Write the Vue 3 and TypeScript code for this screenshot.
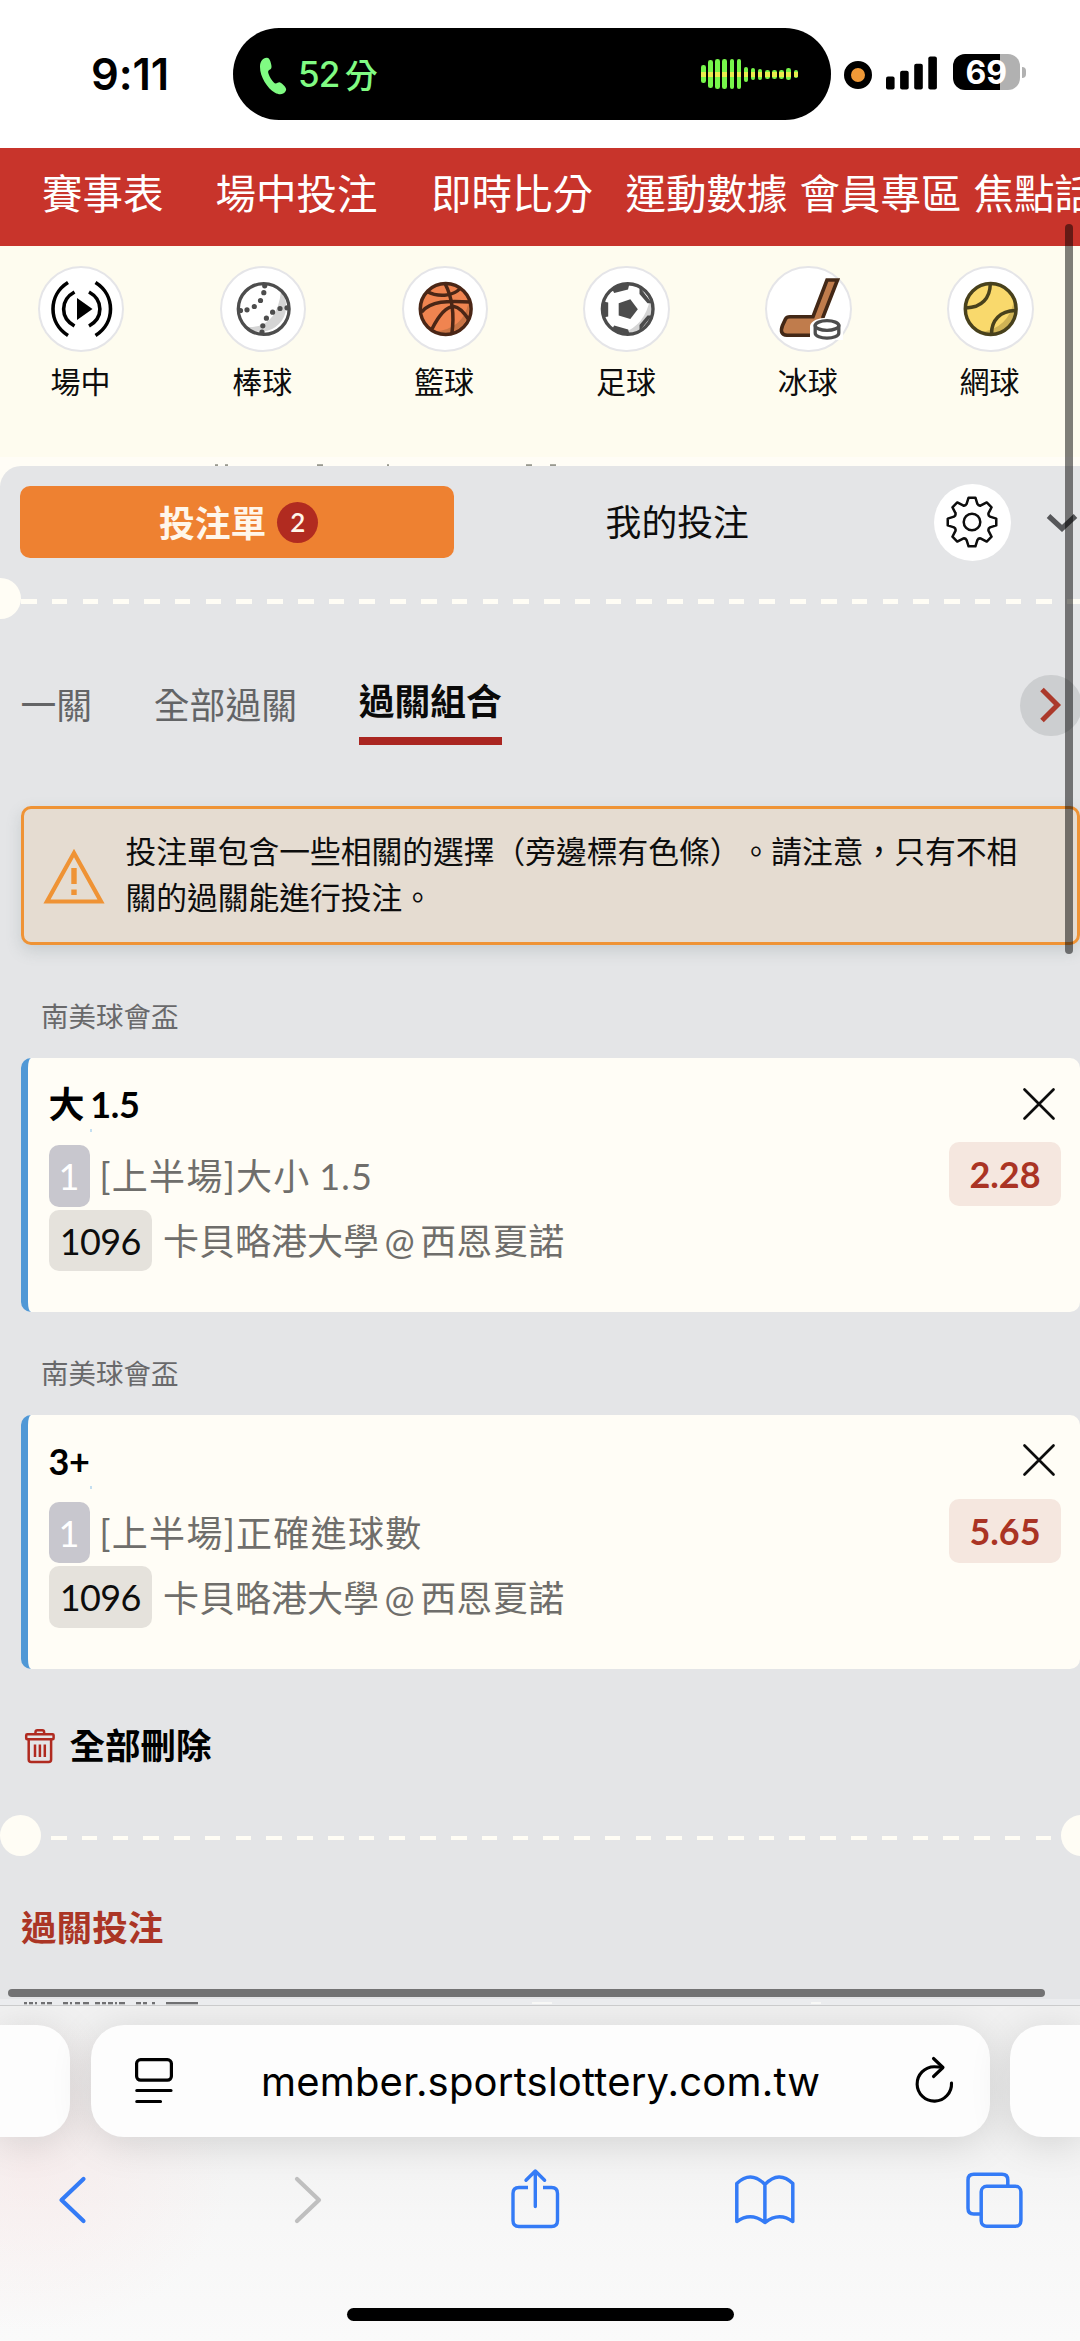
<script setup lang="ts">
interface NavItem {
  label: string
  gap: number
}

interface Bet {
  league: string
  pick: string
  latin: boolean
  market: string
  odds: string
}

const navItems: NavItem[] = [
  { label: '賽事表', gap: 42 },
  { label: '場中投注', gap: 52 },
  { label: '即時比分', gap: 53.5 },
  { label: '運動數據', gap: 32.5 },
  { label: '會員專區', gap: 12 },
  { label: '焦點話題', gap: 12 },
]

const sports: string[] = ['場中', '棒球', '籃球', '足球', '冰球', '網球']

const voiceBars: number[] = [18, 28, 30, 30, 30, 30, 15, 12, 11, 9, 9, 9, 12, 8]

const bets: Bet[] = [
  { league: '南美球會盃', pick: '大 1.5', latin: false, market: '[上半場]大小 1.5', odds: '2.28' },
  { league: '南美球會盃', pick: '3+', latin: true, market: '[上半場]正確進球數', odds: '5.65' },
]

// Tops of the content scrolled under the panel edge: [x, width]
const peekMarks: number[][] = [
  [215, 3], [225, 3], [317, 6], [387, 2], [526, 6], [550, 6],
]

const cutMarks: number[][] = [
  [24, 3], [29, 4], [35, 2], [41, 4], [47, 5], [63, 5], [70, 2], [75, 5], [83, 6],
  [95, 5], [102, 4], [108, 5], [115, 2], [119, 6], [136, 5], [143, 4], [152, 3], [166, 32],
]

// Eight-tooth outline for the settings button
const gearPath: string = (() => {
  const pts: string[] = []
  for (let i = 0; i < 8; i++) {
    const base = (i * Math.PI) / 4
    const at = (r: number, off: number) =>
      `${(r * Math.sin(base + off)).toFixed(2)} ${(-r * Math.cos(base + off)).toFixed(2)}`
    pts.push(
      `${i === 0 ? 'M' : 'L'}${at(18.8, -0.29)} L${at(24.5, -0.14)} L${at(24.5, 0.14)} L${at(18.8, 0.29)} Q${at(17.2, 0.393)} ${at(18.8, 0.495)}`,
    )
  }
  return pts.join(' ') + ' Z'
})()
</script>

<template>
  <div class="screen">
    <header class="status">
      <span class="clock">9:11</span>
      <div class="island">
        <svg class="phone" width="28" height="38" viewBox="0 0 28 38">
          <path
            d="M1 10C1 4 4 1 7.5 .8C10 .7 11 2.5 12 6.5C13 10.5 12.6 11.8 10.5 12.8C9 13.6 8.8 14.6 9.6 17C10.6 20 12.6 23.2 14.6 25.3C16 26.8 17 26.9 18.6 25.8C20.4 24.6 21.6 25 24.4 28C27.4 31.2 27.8 32.4 26.4 34.6C24.4 37.6 20.4 38.2 16 35.8C8 31.2 1 19.5 1 10Z"
            fill="#80fb83"
          />
        </svg>
        <span class="call-num">52</span><span class="call-unit">分</span>
        <div class="voice">
          <span v-for="(h, i) in voiceBars" :key="i" class="voice-bar" :style="{ height: h + 'px' }"><i></i></span>
        </div>
      </div>
      <span class="mic"></span>
      <svg class="signal" width="52" height="34" viewBox="0 0 52 34">
        <rect x="0" y="20.5" width="8.6" height="13" rx="2" />
        <rect x="14.1" y="14.8" width="8.6" height="18.7" rx="2" />
        <rect x="28.2" y="7.8" width="8.6" height="25.7" rx="2" />
        <rect x="42.3" y="0.5" width="8.6" height="33" rx="2" />
      </svg>
      <div class="battery">69</div>
      <span class="battery-cap"></span>
    </header>

    <nav class="nav">
      <span v-for="n in navItems" :key="n.label" :style="{ marginLeft: n.gap + 'px' }">{{ n.label }}</span>
    </nav>

    <div class="sports">
      <div v-for="(s, i) in sports" :key="s" class="sport">
        <div class="sport-ring">
          <svg width="62" height="62" viewBox="-31 -31 62 62">
            <g v-if="i === 0" fill="none" stroke="#000" stroke-width="3.6">
              <path d="M-13 -26.5C-33 -14 -33 14 -13 26.5" />
              <path d="M-6.5 -17C-21 -9 -21 9 -6.5 17" />
              <path d="M14.5 -26.5C34.5 -14 34.5 14 14.5 26.5" />
              <path d="M8 -17C22.5 -9 22.5 9 8 17" />
              <path d="M-4 -11L11.5 0L-4 11Z" fill="#000" stroke="none" />
            </g>
            <g v-else-if="i === 1">
              <circle cx=".7" r="25.4" fill="#fff" />
              <path d="M18 -18A25.4 25.4 0 0 1 -17 18Q14 20 18 -18Z" fill="#d5d5d5" />
              <circle cx=".7" r="25.4" fill="none" stroke="#4d4d4d" stroke-width="3.3" />
              <path
                d="M1.7 -23.2h.01M.8 -16.3h.01M-2.5 -8.5h.01M-8.7 -2.5h.01M-16 .8h.01M-22.5 1.5h.01M24 -1.2h.01M17 -.5h.01M9.6 3.2h.01M3.4 9.2h.01M-.2 16.8h.01M-1 23h.01"
                stroke="#4d4d4d" stroke-width="5.2" stroke-linecap="round"
              />
            </g>
            <g v-else-if="i === 2">
              <circle cx=".7" r="25.4" fill="#f08450" />
              <path d="M23.5 -6A25 25 0 0 1 -10 22.5Q18 20 23.5 -6Z" fill="#c87445" />
              <g fill="none" stroke="#4a2616" stroke-width="3.5">
                <circle cx=".7" r="25.4" />
                <path d="M-18 -17.5C-8 -12 8 -12 15.5 -21" />
                <path d="M-23.5 3C-14 -8 2 -8.5 25.5 -7" />
                <path d="M0 -25.5C7 -12 9.5 6 6.8 25" />
                <path d="M-13 20C-3 0 4 -2.5 9 -2.5C14 -2 20 5 24 11" />
              </g>
            </g>
            <g v-else-if="i === 3">
              <circle cx=".7" r="25.4" fill="#fff" />
              <path d="M23 -10A24 24 0 0 1 -4 24Q18 16 23 -10Z" fill="#d5d5d5" />
              <circle cx=".7" r="25.3" fill="none" stroke="#4c4c4c" stroke-width="3.4" />
              <g fill="#4c4c4c">
                <path d="M-8.3 -5.7L3.3 -9.8L10.8 .3L3.3 10L-8.3 6.5Z" />
                <path d="M-15.5 -21L-12.8 -16L1 -19.6L2.5 -25.5Z" />
                <path d="M12.5 -22V-15L20.5 -5.7H25Z" />
                <path d="M25 6.5H20.5L12.5 16V22Z" />
                <path d="M-15.5 21L-12.8 16.6L1.2 20.5L2.5 25.5Z" />
                <path d="M-24 -7.5L-18.8 -6.5V7.5L-24 8.5Z" />
              </g>
            </g>
            <g v-else-if="i === 4">
              <path
                d="M18 -29H28.5L14 8V26.2H-22Q-30 25.5 -26.5 16.5L-23.5 10Q-22.3 7.7 -19 7.7H4Z"
                fill="#c07c4c" stroke="#432816" stroke-width="3.6"
              />
              <path d="M1 31V17C3 6 33 6 34 17V31Z" fill="#fff" />
              <path d="M6.2 15.5V24C6.2 30.8 29.8 30.8 29.8 24V15.5" fill="#fff" stroke="#4d4d4d" stroke-width="3.3" />
              <ellipse cx="18" cy="16.5" rx="11.8" ry="4.8" fill="#fff" stroke="#4d4d4d" stroke-width="3.3" />
            </g>
            <g v-else>
              <circle cx=".7" r="25.4" fill="#f9d96c" />
              <path d="M24 -9A25 25 0 0 1 -9 23Q19 19 24 -9Z" fill="#cfb355" />
              <g fill="none" stroke="#48411c" stroke-width="3.5">
                <circle cx=".7" r="25.4" />
                <path d="M.3 -25C0 -11 -8 -1.5 -24 -1" />
                <path d="M25.5 1.5C10 2 1.5 11 1.5 25" />
              </g>
            </g>
          </svg>
        </div>
        <span class="sport-name">{{ s }}</span>
      </div>
    </div>

    <div class="peek">
      <svg width="1080" height="9" viewBox="0 0 1080 9">
        <rect v-for="m in peekMarks" :key="m[0]" :x="m[0]" y="7.2" :width="m[1]" height="1.8" fill="#99998f" />
      </svg>
    </div>

    <main class="panel-wrap">
      <div class="panel">
        <div class="head">
          <div class="slip-tab">
            <span>投注單</span>
            <b class="count">2</b>
          </div>
          <div class="mine">我的投注</div>
          <div class="gear">
            <svg width="56" height="56" viewBox="-28 -28 56 56" fill="none" stroke="#0d0d0d" stroke-width="2.5" stroke-linejoin="round">
              <path :d="gearPath" />
              <circle r="8.3" />
            </svg>
          </div>
          <svg class="fold" width="32" height="20" viewBox="0 0 32 20">
            <path d="M2.5 3L16 15.5L29.5 3" fill="none" stroke="#56575a" stroke-width="5.2" />
          </svg>
        </div>

        <div class="divider top"><i class="dot left"></i><i class="dash"></i></div>

        <div class="tabs">
          <span class="tab">一關</span>
          <span class="tab">全部過關</span>
          <span class="tab active">過關組合</span>
          <div class="next">
            <svg width="24" height="36" viewBox="0 0 24 36">
              <path d="M3 2.5L18.5 18L3 33.5" fill="none" stroke="#ab392b" stroke-width="5" />
            </svg>
          </div>
        </div>

        <div class="alert">
          <svg class="warn" width="62" height="58" viewBox="0 0 62 58">
            <path d="M31 6L58 54.5H4Z" fill="none" stroke="#ef9335" stroke-width="4.2" />
            <path d="M31 21V37M31 42.5V48" stroke="#ef9335" stroke-width="5.4" />
          </svg>
          <p>投注單包含一些相關的選擇（旁邊標有色條）。請注意，只有不相<br />關的過關能進行投注。</p>
        </div>

        <section v-for="b in bets" :key="b.odds" class="bet">
          <div class="league">{{ b.league }}</div>
          <article class="card">
            <div class="card-head">
              <span class="pick" :class="{ latin: b.latin }">{{ b.pick }}</span>
              <svg class="close" width="32" height="32" viewBox="0 0 32 32">
                <path d="M1.5 1.5L30.5 30.5M30.5 1.5L1.5 30.5" stroke="#0d0d0d" stroke-width="2.7" stroke-linecap="round" />
              </svg>
              <i class="speck"></i>
            </div>
            <div class="line">
              <span class="chip one">1</span>
              <span class="market">{{ b.market }}</span>
              <span class="odds">{{ b.odds }}</span>
            </div>
            <div class="line second">
              <span class="chip code">1096</span>
              <span class="teams">卡貝略港大學 @ 西恩夏諾</span>
            </div>
          </article>
        </section>

        <div class="clear">
          <svg width="30" height="35" viewBox="0 0 30 35" fill="none" stroke="#b02a20" stroke-width="2.5">
            <path d="M10.5 4.5V3Q10.5 1.2 12.3 1.2H17.3Q19.1 1.2 19.1 3V4.5" />
            <rect x="1.2" y="5.2" width="27.4" height="5" rx="1" />
            <path d="M3.7 10.5V30.5Q3.7 33 6.2 33H23.6Q26.1 33 26.1 30.5V10.5M10 15.5V28M14.9 15.5V28M19.8 15.5V28" />
          </svg>
          <span>全部刪除</span>
        </div>

        <div class="divider bottom"><i class="dot full"></i><i class="dash thin"></i><i class="dot right"></i></div>

        <h2 class="combo">過關投注</h2>
        <svg class="cut" width="1080" height="6" viewBox="0 0 1080 6">
          <rect y="0" width="1080" height="6" fill="#ebecee" />
          <rect v-for="m in cutMarks" :key="m[0]" :x="m[0]" y="3" :width="m[1]" height="2.3" fill="#707072" />
          <rect x="532" y="3" width="20" height="2" fill="#f8f8f6" />
          <rect x="811" y="3" width="10" height="2" fill="#f8f8f6" />
        </svg>
      </div>
    </main>

    <footer class="browser">
      <div class="address-row">
        <div class="tab-card prev"></div>
        <div class="address">
          <svg width="38" height="46" viewBox="0 0 38 46" fill="none" stroke="#000" stroke-width="3.2" stroke-linecap="round">
            <rect x="1.6" y="1.6" width="34.8" height="20.6" rx="4" />
            <path d="M1.8 32.5H36M1.8 43.5H25.5" />
          </svg>
          <span class="url">member.sportslottery.com.tw</span>
          <svg class="reload" width="40" height="48" viewBox="0 0 40 48" fill="none" stroke="#000" stroke-width="3.1" stroke-linecap="round" stroke-linejoin="round">
            <path d="M36.5 27A17.2 17.2 0 1 1 19.3 10.7Q23.5 10.7 27.5 11.2" />
            <path d="M18.5 2.5L28 11.5L18.5 20.5" />
          </svg>
        </div>
        <div class="tab-card after"></div>
      </div>
      <div class="tools">
        <svg class="back" width="28" height="62" viewBox="59 2169 28 62" fill="none" stroke="#347bf6" stroke-width="4.2" stroke-linecap="round" stroke-linejoin="round">
          <path d="M83.5 2179L61.5 2200L83.5 2221" />
        </svg>
        <svg class="forward" width="28" height="62" viewBox="294 2169 28 62" fill="none" stroke="#bfbfbf" stroke-width="4.2" stroke-linecap="round" stroke-linejoin="round">
          <path d="M297 2179L319 2200L297 2221" />
        </svg>
        <svg class="share" width="50" height="62" viewBox="510 2169 50 62" fill="none" stroke="#347bf6" stroke-width="3.4" stroke-linecap="round" stroke-linejoin="round">
          <path d="M528 2187.5H519Q513 2187.5 513 2193.5V2220.5Q513 2226.5 519 2226.5H551.5Q557.5 2226.5 557.5 2220.5V2193.5Q557.5 2187.5 551.5 2187.5H543" stroke-linecap="butt" />
          <path d="M535.3 2206.5V2171.5M526 2180.3L535.3 2171L544.6 2180.3" />
        </svg>
        <svg class="book" width="62" height="62" viewBox="734 2169 62 62" fill="none" stroke="#347bf6" stroke-width="3.5" stroke-linecap="round" stroke-linejoin="round">
          <path d="M764.9 2184.5Q751 2170 736.8 2183.5V2221.5Q751 2211.5 764.9 2222.5Q779 2211.5 792.8 2221.5V2183.5Q779 2170 764.9 2184.5V2222.5" />
        </svg>
        <svg class="pages" width="60" height="62" viewBox="965 2169 60 62" fill="none" stroke="#347bf6" stroke-width="3.5">
          <path d="M1007.8 2185V2180Q1007.8 2174.3 1002 2174.3H973.8Q968 2174.3 968 2180V2208.3Q968 2214.1 973.8 2214.1H980" />
          <rect x="981.2" y="2186.3" width="39.7" height="40" rx="5.5" />
        </svg>
      </div>
      <div class="home"></div>
    </footer>

    <i class="scroll-y"></i>
    <i class="scroll-x"></i>
  </div>
</template>

<style>
body {
  margin: 0;
  background: #fff;
}
</style>

<style scoped>
.screen {
  position: relative;
  width: 1080px;
  height: 2341px;
  overflow: hidden;
  display: flex;
  flex-direction: column;
  background: #fff;
  font-family: Lato, 'Noto Sans CJK TC', sans-serif;
  color: #0d0d0d;
  white-space: nowrap;
}
svg {
  display: block;
  flex: none;
  overflow: visible;
}

/* Status bar */
.status {
  height: 148px;
  flex: none;
  display: flex;
  align-items: center;
  font-family: Inter, 'Noto Sans CJK TC', sans-serif;
}
.clock {
  width: 142px;
  margin-left: 91px;
  margin-top: -1px;
  font-size: 43.5px;
  font-weight: 600;
  line-height: 60px;
  letter-spacing: -0.1px;
  color: #000;
}
.island {
  width: 598px;
  height: 92.5px;
  border-radius: 47px;
  background: #000;
  display: flex;
  align-items: center;
  color: #80fb83;
}
.phone {
  margin: 3px 11px 0 26px;
}
.call-num {
  font-size: 35px;
  font-weight: 500;
  letter-spacing: -1px;
}
.call-unit {
  margin-left: 5.5px;
  margin-top: -1px;
  font-size: 33px;
  font-weight: 500;
}
.voice {
  margin-left: auto;
  margin-right: 33px;
  display: flex;
  align-items: center;
  gap: 2.62px;
}
.voice-bar {
  width: 4.5px;
  border-radius: 2.3px;
  background: #77f64a;
  display: flex;
  align-items: center;
  overflow: hidden;
}
.voice-bar i {
  width: 100%;
  height: 5px;
  background: #e9ec4c;
}
.mic {
  width: 14.4px;
  height: 14.4px;
  margin: 2px 13.5px 0 12.8px;
  border: 7.7px solid #000;
  border-radius: 50%;
  background: #f09937;
}
.signal {
  margin-top: -3px;
}
.battery {
  width: 67px;
  height: 36.5px;
  margin: -4px 0 0 15px;
  border-radius: 12px;
  background: linear-gradient(90deg, #000 69.5%, #b1b1b1 69.5%);
  color: #fff;
  font-size: 32px;
  font-weight: 700;
  line-height: 37px;
  text-align: center;
}
.battery-cap {
  width: 4px;
  height: 11px;
  margin: -3px 0 0 2.5px;
  border-radius: 0 5px 5px 0;
  background: #b1b1b1;
}

/* Site navigation */
.nav {
  height: 97.5px;
  flex: none;
  display: flex;
  align-items: center;
  background: #c8342b;
  color: #fff;
  font-size: 40.5px;
  line-height: 60px;
}
.nav span {
  flex: none;
  margin-top: -5px;
}

/* Sport shortcuts */
.sports {
  height: 211.5px;
  flex: none;
  display: flex;
  padding-left: 38px;
  gap: 95.45px;
  background: #fefcef;
}
.sport {
  width: 86.4px;
  flex: none;
  display: flex;
  flex-direction: column;
  align-items: center;
  padding-top: 20.5px;
}
.sport-ring {
  width: 82.4px;
  height: 82.4px;
  border: 2px solid #e5e5e8;
  border-radius: 50%;
  background: #fff;
  display: flex;
  align-items: center;
  justify-content: center;
}
.sport-name {
  margin: 9px 1.5px 0 0;
  font-size: 30px;
  line-height: 40px;
}
.peek {
  height: 9px;
  flex: none;
  background: #fffdf6;
}

/* Bet slip */
.panel-wrap {
  height: 1539px;
  flex: none;
  background: #fffdf6;
}
.panel {
  height: 100%;
  display: flex;
  flex-direction: column;
  border-top-left-radius: 21px;
  background: #e4e5e7;
  overflow: hidden;
}
.head {
  height: 112px;
  flex: none;
  display: flex;
  align-items: center;
  font-size: 35.8px;
}
.slip-tab {
  width: 434px;
  height: 72.5px;
  margin-left: 20.2px;
  padding-left: 3px;
  box-sizing: border-box;
  border-radius: 10px;
  background: #ee8131;
  color: #fff6ea;
  font-weight: 700;
  display: flex;
  align-items: center;
  justify-content: center;
  gap: 11px;
}
.slip-tab span {
  margin-top: -3px;
}
.count {
  width: 41px;
  height: 41px;
  border-radius: 50%;
  background: #b12b20;
  font-size: 26px;
  font-weight: 600;
  line-height: 41px;
  text-align: center;
}
.mine {
  width: 446px;
  margin-top: -4px;
  text-align: center;
}
.gear {
  width: 77px;
  height: 77px;
  margin-left: 33.8px;
  border-radius: 50%;
  background: #fff;
  display: flex;
  align-items: center;
  justify-content: center;
}
.fold {
  margin: 2px 0 0 35.5px;
}
.divider {
  height: 41.5px;
  flex: none;
  display: flex;
  align-items: flex-start;
}
.dot {
  width: 41px;
  height: 41px;
  flex: none;
  border-radius: 50%;
  background: #fffdf5;
}
.dot.left {
  margin-left: -20.5px;
}
.dash {
  flex: 1;
  height: 5px;
  margin-top: 21px;
  background: repeating-linear-gradient(90deg, #fffdf5 0 15.6px, transparent 15.6px 30.77px);
}
.dash.thin {
  height: 4.3px;
  margin-left: 10px;
}
.dot.right {
  margin-right: -21.5px;
}
.tabs {
  height: 131.5px;
  flex: none;
  padding: 55px 0 0 20.5px;
  display: flex;
  align-items: flex-start;
  gap: 61.7px;
  font-size: 35.8px;
  line-height: 50px;
}
.tab {
  margin-top: 6.5px;
  color: #636466;
}
.tab.active {
  margin-top: 2px;
  padding-bottom: 10.5px;
  border-bottom: 8px solid #aa2621;
  color: #0a0a0a;
  font-weight: 700;
}
.next {
  width: 61.6px;
  height: 61.6px;
  margin: 0 -1.5px 0 auto;
  border-radius: 50%;
  background: #ccced0;
  display: flex;
  align-items: center;
  justify-content: center;
}
.alert {
  box-sizing: border-box;
  height: 139px;
  flex: none;
  margin-left: 20.5px;
  padding: 0 0 0 19px;
  display: flex;
  align-items: center;
  border: 3px solid #ef9335;
  border-radius: 10px;
  background: #e5dcd1;
  box-shadow: 0 6px 16px rgba(90, 110, 110, 0.2);
}
.alert p {
  margin: -1px 0 0 21px;
  font-size: 30.75px;
  line-height: 46px;
  text-spacing-trim: space-all;
}
.bet {
  flex: none;
}
.bet:first-of-type {
  padding-top: 10.3px;
}
.league {
  height: 59.7px;
  padding: 43px 0 0 41px;
  font-size: 27.5px;
  line-height: 37px;
  color: #69696b;
}
.card {
  box-sizing: border-box;
  height: 254px;
  margin-left: 21px;
  padding-left: 20.5px;
  border-left: 7.5px solid #5098d6;
  border-radius: 10px;
  background: #fffdf6;
  font-size: 36px;
}
.card-head {
  position: relative;
  height: 87.3px;
  display: flex;
  align-items: center;
}
.pick {
  margin-top: 0;
  font-weight: 700;
  word-spacing: -2.5px;
  letter-spacing: -0.3px;
  color: #000;
}
.pick.latin {
  margin-top: 5px;
}
.close {
  margin: 4px 25px 0 auto;
}
.speck {
  position: absolute;
  left: 41px;
  top: 71px;
  width: 2px;
  height: 3px;
  background: #c5dff0;
}
.line {
  height: 61.4px;
  display: flex;
  align-items: center;
  color: #6f6e6b;
}
.line.second {
  margin-top: 3px;
}
.chip {
  box-sizing: border-box;
  height: 61.4px;
  border-radius: 10px;
  line-height: 63px;
  text-align: center;
}
.chip.one {
  width: 41px;
  background: #c8c7ce;
  color: #fff;
}
.chip.code {
  width: 103.5px;
  background: #e5e2dc;
  color: #0d0d0d;
  letter-spacing: -0.6px;
}
.market {
  margin: -3px 0 0 10px;
  letter-spacing: 1.3px;
  word-spacing: -2px;
}
.teams {
  margin: -3px 0 0 11px;
  word-spacing: -3.7px;
}
.odds {
  width: 112px;
  height: 64px;
  margin: -3px 19px 0 auto;
  border-radius: 10px;
  background: #f5e7df;
  color: #aa3424;
  font-size: 36px;
  font-weight: 700;
  line-height: 65px;
  text-align: center;
}
.clear {
  height: 146px;
  flex: none;
  display: flex;
  align-items: center;
  gap: 14.5px;
  padding: 0 0 0 25px;
  font-size: 35.5px;
  font-weight: 700;
  color: #000;
}
.clear svg {
  margin-top: 9px;
}
.clear span {
  margin-top: 4px;
}
.combo {
  height: 143px;
  flex: none;
  margin: 0;
  padding-left: 21px;
  font-size: 35.6px;
  font-weight: 700;
  line-height: 144px;
  color: #ab3525;
}
.cut {
  margin-top: auto;
}

/* Browser chrome */
.browser {
  position: relative;
  flex: 1;
  display: flex;
  flex-direction: column;
  align-items: center;
  overflow: hidden;
  border-top: 1.5px solid #cbcbcc;
  background:
    radial-gradient(200px 160px at 30px 165px, rgba(250, 228, 228, 0.45), transparent),
    linear-gradient(#f1f1f1, #f2f2f2 40%, #f7f7f7 65%, #fafafa);
}
.address-row {
  width: 1080px;
  height: 112.5px;
  flex: none;
  margin-top: 18.5px;
  display: flex;
  gap: 20.4px;
}
.tab-card,
.address {
  height: 112.5px;
  background: #fdfdfd;
  box-shadow: 0 6px 40px rgba(0, 0, 0, 0.13);
}
.tab-card {
  width: 70.2px;
  flex: none;
}
.prev {
  border-radius: 0 33px 33px 0;
}
.after {
  border-radius: 33px 0 0 33px;
}
.address {
  box-sizing: border-box;
  width: 899px;
  flex: none;
  padding: 0 35px 0 44px;
  border-radius: 33px;
  display: flex;
  align-items: center;
  justify-content: space-between;
}
.url {
  margin: 2px 6px 0 0;
  font-family: Inter, sans-serif;
  font-size: 40px;
  letter-spacing: 0.2px;
  color: #000;
}
.reload {
  margin-top: -2px;
}
.tools {
  width: 1080px;
  height: 62px;
  flex: none;
  margin-top: 31.5px;
  display: flex;
}
.back {
  margin-left: 59px;
}
.forward {
  margin-left: 207px;
}
.share {
  margin-left: 188px;
}
.book {
  margin-left: 174px;
}
.pages {
  margin-left: 169px;
}
.home {
  width: 387px;
  height: 13px;
  flex: none;
  margin-top: 77px;
  border-radius: 7px;
  background: #000;
}

/* Overlay scroll indicators */
.scroll-y,
.scroll-x {
  position: absolute;
  border-radius: 4px;
  background: rgba(0, 0, 0, 0.5);
}
.scroll-y {
  left: 1065px;
  top: 224px;
  width: 8px;
  height: 730px;
}
.scroll-x {
  left: 7.5px;
  top: 1989px;
  width: 1037px;
  height: 8px;
}
</style>
